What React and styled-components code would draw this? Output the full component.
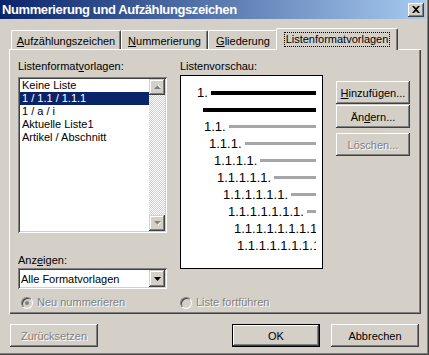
import styled, { createGlobalStyle } from "styled-components";

const GlobalStyle = createGlobalStyle`
  html, body {
    margin: 0;
    padding: 0;
    background: #d4d0c8;
  }
  body {
    font-family: "Liberation Sans", Arial, sans-serif;
    font-size: 11px;
    color: #000;
  }
`;

const Window = styled.div`
  width: 429px;
  height: 355px;
  box-sizing: border-box;
  background: #d4d0c8;
  box-shadow: inset -1px -1px #404040, inset -2px -2px #808080;
  display: flex;
  flex-direction: column;
  overflow: hidden;
`;

const TitleBar = styled.div`
  height: 19px;
  margin-right: 3px;
  padding: 0 2px;
  background: linear-gradient(to right, #0a246a, #a6caf0);
  display: flex;
  align-items: center;
  justify-content: space-between;
`;

const Title = styled.span`
  color: #fff;
  font-weight: bold;
  font-size: 13px;
  letter-spacing: -0.4px;
  white-space: nowrap;
`;

const CloseButton = styled.div`
  width: 16px;
  height: 14px;
  box-sizing: border-box;
  background: #d4d0c8;
  box-shadow: inset -1px -1px #404040, inset 1px 1px #fff,
    inset -2px -2px #808080;
  display: flex;
  align-items: center;
  justify-content: center;
`;

const Body = styled.div`
  flex: 1;
  padding: 9px 8px 0 9px;
  display: flex;
  flex-direction: column;
`;

const TabStrip = styled.div`
  height: 21px;
  padding-left: 2px;
  display: flex;
  align-items: flex-end;
  position: relative;
  z-index: 1;
`;

const Tab = styled.div`
  width: ${(p) => p.$width}px;
  height: ${(p) => (p.$active ? 22 : 19)}px;
  margin: 0 ${(p) => (p.$active ? -2 : 0)}px
    ${(p) => (p.$active ? -1 : 0)}px;
  box-sizing: border-box;
  padding-top: 4px;
  background: #d4d0c8;
  border-top: 1px solid #fff;
  border-left: 1px solid #fff;
  border-right: 1px solid #404040;
  border-radius: 2px 2px 0 0;
  box-shadow: inset -1px 0 #808080;
  text-align: center;
  line-height: 13px;
  white-space: nowrap;
`;

const Focus = styled.span`
  display: inline-block;
  padding: 1px 2px 1px 2px;
  margin-top: -1px;
  outline: 1px dotted #000;
  outline-offset: -1px;
`;

const Key = styled.u`
  text-decoration: underline;
  text-underline-offset: 1px;
`;

const Panel = styled.div`
  height: 265px;
  box-sizing: border-box;
  padding: 11px 0 0 9px;
  box-shadow: inset 1px 1px #fff, inset -1px -1px #404040,
    inset -2px -2px #808080;
  display: flex;
  flex-direction: column;
`;

const Columns = styled.div`
  display: grid;
  grid-template-columns: 149px 143px 74px;
  column-gap: 13px;
  align-items: start;
`;

const Column = styled.div`
  display: flex;
  flex-direction: column;
  padding-top: ${(p) => p.$top || 0}px;
`;

const Label = styled.div`
  height: 13px;
  line-height: 13px;
  margin-top: ${(p) => p.$top || 0}px;
  margin-bottom: ${(p) => p.$bottom || 0}px;
  white-space: nowrap;
`;

const Sunken = styled.div`
  box-sizing: border-box;
  background: #fff;
  padding: 2px;
  box-shadow: inset 1px 1px #808080, inset -1px -1px #fff,
    inset 2px 2px #404040, inset -2px -2px #d4d0c8;
`;

const ListBox = styled(Sunken)`
  height: 156px;
  display: flex;
`;

const Items = styled.div`
  flex: 1;
  display: flex;
  flex-direction: column;
`;

const Item = styled.div`
  height: 13px;
  line-height: 13px;
  padding-left: 2px;
  white-space: nowrap;
  background: ${(p) => (p.$selected ? "#0a246a" : "transparent")};
  color: ${(p) => (p.$selected ? "#fff" : "#000")};
`;

const ScrollBar = styled.div`
  width: 16px;
  display: flex;
  flex-direction: column;
  background: repeating-conic-gradient(#d4d0c8 0 25%, #fff 0 50%) 0 0 / 2px
    2px;
`;

const ArrowButton = styled.div`
  width: 16px;
  height: 16px;
  box-sizing: border-box;
  background: #d4d0c8;
  box-shadow: inset -1px -1px #404040, inset 1px 1px #d4d0c8,
    inset -2px -2px #808080, inset 2px 2px #fff;
  display: flex;
  align-items: center;
  justify-content: center;
  margin-top: ${(p) => (p.$bottom ? "auto" : 0)};
`;

const Combo = styled(Sunken)`
  height: 21px;
  display: flex;
  align-items: center;
  padding-left: 3px;
  white-space: nowrap;
`;

const ComboText = styled.span`
  flex: 1;
`;

const ComboButton = styled(ArrowButton)`
  height: 17px;
`;

const Preview = styled.div`
  height: 194px;
  box-sizing: border-box;
  border: 1px solid #000;
  background: #fff;
  padding: 8px 6px 0 0;
  display: flex;
  flex-direction: column;
  font-size: 13px;
`;

const PreviewRow = styled.div`
  height: 17px;
  padding-left: ${(p) => p.$indent}px;
  display: flex;
  align-items: center;
  overflow: hidden;
  white-space: nowrap;
`;

const PreviewNum = styled.span`
  flex: none;
  margin-right: 3px;
`;

const PreviewBar = styled.div`
  flex: 1;
  min-width: 0;
  height: ${(p) => (p.$dark ? 4 : 3)}px;
  background: ${(p) => (p.$dark ? "#000" : "#a6a6a6")};
`;

const Button = styled.div`
  width: ${(p) => p.$width || 74}px;
  height: 23px;
  margin-top: ${(p) => p.$top || 0}px;
  box-sizing: border-box;
  background: #d4d0c8;
  box-shadow: ${(p) =>
    p.$default
      ? "inset 0 0 0 1px #000, inset -2px -2px #404040, inset 2px 2px #fff, inset -3px -3px #808080"
      : "inset -1px -1px #404040, inset 1px 1px #fff, inset -2px -2px #808080"};
  display: flex;
  align-items: center;
  justify-content: center;
  white-space: nowrap;
  color: ${(p) => (p.$disabled ? "#808080" : "#000")};
  text-shadow: ${(p) => (p.$disabled ? "1px 1px #fff" : "none")};
`;

const RadioRow = styled.div`
  display: grid;
  grid-template-columns: 149px 143px;
  column-gap: 13px;
  margin-top: 7px;
`;

const RadioLabel = styled.div`
  display: flex;
  align-items: center;
  gap: 4px;
  padding-left: ${(p) => p.$pad || 0}px;
  color: #808080;
  text-shadow: 1px 1px #fff;
  line-height: 13px;
  white-space: nowrap;
`;

const RadioCircle = styled.span`
  width: 12px;
  height: 12px;
  box-sizing: border-box;
  border-radius: 50%;
  background: #d4d0c8;
  border: 1px solid;
  border-color: #808080 #fff #fff #808080;
  box-shadow: inset 1px 1px #404040;
  display: flex;
  align-items: center;
  justify-content: center;
  &::after {
    content: "";
    width: 4px;
    height: 4px;
    border-radius: 50%;
    background: ${(p) => (p.$checked ? "#808080" : "transparent")};
  }
`;

const ButtonRow = styled.div`
  margin-top: 10px;
  padding: 0 2px 0 1px;
  display: flex;
  gap: 11px;
`;

const Spacer = styled.div`
  flex: 1;
`;

const GrayArrow = ({ down }) => (
  <svg width="9" height="6" viewBox="0 0 9 6">
    <g transform={down ? "" : "translate(0 6) scale(1 -1)"}>
      <path d="M2 1h5L4.5 4.5z" fill="#fff" transform="translate(1 1)" />
      <path d="M1 1h7L4.5 4.5z" fill="#808080" />
    </g>
  </svg>
);

const rows = [
  { indent: 16, num: "1.", dark: true },
  { indent: 22, num: "", dark: true },
  { indent: 23, num: "1.1." },
  { indent: 28, num: "1.1.1." },
  { indent: 33, num: "1.1.1.1." },
  { indent: 36, num: "1.1.1.1.1." },
  { indent: 42, num: "1.1.1.1.1.1." },
  { indent: 47, num: "1.1.1.1.1.1.1." },
  { indent: 53, num: "1.1.1.1.1.1.1.1." },
  { indent: 56, num: "1.1.1.1.1.1.1.1.1." },
];

const listItems = [
  "Keine Liste",
  "1 / 1.1 / 1.1.1",
  "1 / a / i",
  "Aktuelle Liste1",
  "Artikel / Abschnitt",
];

export default function App() {
  return (
    <>
      <GlobalStyle />
      <Window>
        <TitleBar>
          <Title>Nummerierung und Aufzählungszeichen</Title>
          <CloseButton>
            <svg width="8" height="7" viewBox="0 0 8 7">
              <path
                d="M0 0h2l2 2 2-2h2L5 3.5 8 7H6L4 5 2 7H0l3-3.5z"
                fill="#000"
              />
            </svg>
          </CloseButton>
        </TitleBar>
        <Body>
          <TabStrip>
            <Tab $width={110}>
              <Key>A</Key>ufzählungszeichen
            </Tab>
            <Tab $width={87}>
              <Key>N</Key>ummerierung
            </Tab>
            <Tab $width={70}>
              <Key>G</Key>liederung
            </Tab>
            <Tab $width={122} $active>
              <Focus>Listenformatvorlagen</Focus>
            </Tab>
          </TabStrip>
          <Panel>
            <Columns>
              <Column>
                <Label $bottom={4}>
                  Listenformat<Key>v</Key>orlagen:
                </Label>
                <ListBox>
                  <Items>
                    {listItems.map((t, i) => (
                      <Item key={t} $selected={i === 1}>
                        {t}
                      </Item>
                    ))}
                  </Items>
                  <ScrollBar>
                    <ArrowButton>
                      <GrayArrow />
                    </ArrowButton>
                    <ArrowButton $bottom>
                      <GrayArrow down />
                    </ArrowButton>
                  </ScrollBar>
                </ListBox>
                <Label $top={21} $bottom={1}>
                  Anz<Key>e</Key>igen:
                </Label>
                <Combo>
                  <ComboText>Alle Formatvorlagen</ComboText>
                  <ComboButton>
                    <svg width="7" height="4" viewBox="0 0 7 4">
                      <path d="M0 0h7L3.5 4z" fill="#000" />
                    </svg>
                  </ComboButton>
                </Combo>
              </Column>
              <Column>
                <Label $bottom={2}>Listenvorschau:</Label>
                <Preview>
                  {rows.map((r, i) => (
                    <PreviewRow key={i} $indent={r.indent}>
                      {r.num && <PreviewNum>{r.num}</PreviewNum>}
                      <PreviewBar $dark={r.dark} />
                    </PreviewRow>
                  ))}
                </Preview>
              </Column>
              <Column $top={21}>
                <Button>
                  <Key>H</Key>inzufügen...
                </Button>
                <Button $top={1}>
                  Än<Key>d</Key>ern...
                </Button>
                <Button $top={5} $disabled>
                  Löschen...
                </Button>
              </Column>
            </Columns>
            <RadioRow>
              <RadioLabel $pad={3}>
                <RadioCircle $checked />
                Neu nummerieren
              </RadioLabel>
              <RadioLabel>
                <RadioCircle />
                Liste fortführen
              </RadioLabel>
            </RadioRow>
          </Panel>
          <ButtonRow>
            <Button $width={88} $disabled>
              Zurücksetzen
            </Button>
            <Spacer />
            <Button $width={88} $default>
              OK
            </Button>
            <Button $width={88}>Abbrechen</Button>
          </ButtonRow>
        </Body>
      </Window>
    </>
  );
}
